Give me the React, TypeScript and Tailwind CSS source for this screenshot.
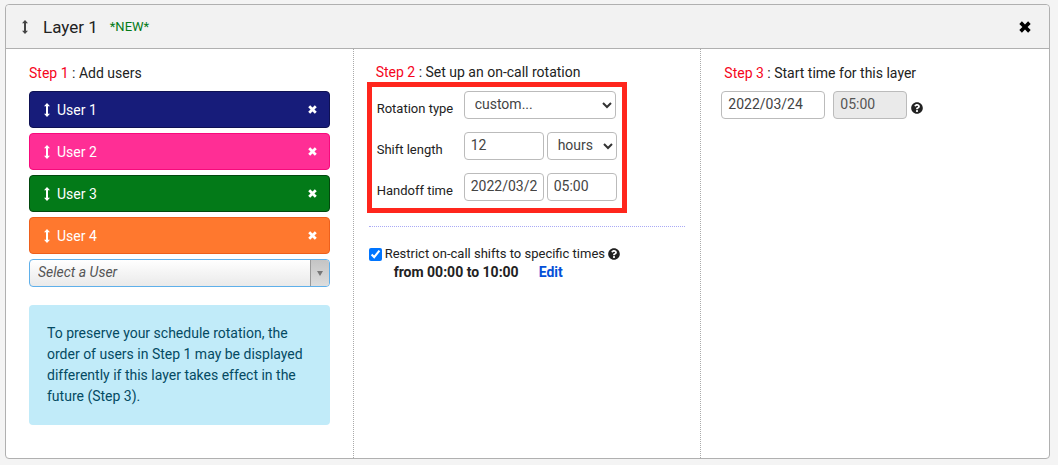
import { useState } from 'react';
import { FaQuestionCircle } from 'react-icons/fa';

const initialUsers = [
  { name: 'User 1', color: 'bg-[#171c7a] border-[#0e1153]' },
  { name: 'User 2', color: 'bg-[#ff2e95] border-[#f70a7c]' },
  { name: 'User 3', color: 'bg-[#037a18] border-[#02480e]' },
  { name: 'User 4', color: 'bg-[#ff782e] border-[#ee601c]' },
];

const field =
  'h-7 rounded border border-[#bbbbbb] bg-white px-1.5 pb-0.5 text-sm text-[#444444] outline-none';

function DragIcon({ className }: { className: string }) {
  return (
    <svg className={className} viewBox="0 0 6 14" fill="currentColor" aria-hidden="true">
      <path d="M3 0l3 3.3H4v7.4h2L3 14 0 10.7h2V3.3H0z" />
    </svg>
  );
}

function CloseIcon({ className }: { className: string }) {
  return (
    <svg className={className} viewBox="0 0 12 12" fill="currentColor" aria-hidden="true">
      <path d="M2.9.3L6 3.4 9.1.3l2.6 2.6L8.6 6l3.1 3.1-2.6 2.6L6 8.6l-3.1 3.1L.3 9.1 3.4 6 .3 2.9z" />
    </svg>
  );
}

function Chevron() {
  return (
    <svg
      className="pointer-events-none absolute top-2.5 right-1 h-2 w-2.5"
      viewBox="0 0 10 8"
      fill="none"
      stroke="#333333"
      strokeWidth="2"
      aria-hidden="true"
    >
      <path d="M1 2l4 4 4-4" />
    </svg>
  );
}

function StepTitle({ step, children }: { step: number; children: string }) {
  return (
    <h3 className="text-sm leading-5 text-[#222222]">
      <span className="text-[#f5051c]">Step {step}</span> : {children}
    </h3>
  );
}

export default function App() {
  const [users, setUsers] = useState(initialUsers);
  const [restricted, setRestricted] = useState(true);

  return (
    <div className="min-h-screen bg-[#f4f4f4] pt-1 pr-2 pb-1.5 pl-[5px] font-['Roboto',sans-serif] text-[#222222]">
      <section className="rounded border border-[#b0b0b0] bg-white">
        {/* Layer header */}
        <header className="flex h-11 items-center rounded-t border-b border-[#b0b0b0] bg-[#f2f2f2] pr-[18px] pl-4">
          <DragIcon className="h-3.5 w-1.5 text-[#444444]" />
          <h2 className="ml-[15px] text-[17px] leading-6">Layer 1</h2>
          <span className="ml-3 text-[13px] text-[#037a18]">*NEW*</span>
          <button type="button" aria-label="Remove layer" className="ml-auto text-black">
            <CloseIcon className="h-3 w-3" />
          </button>
        </header>

        <div className="grid grid-cols-3">
          {/* Step 1 */}
          <div className="border-r border-dotted border-[#aaaaaa] px-[23px] pt-3.5 pb-[33px]">
            <StepTitle step={1}>Add users</StepTitle>
            <ul className="mt-2 flex flex-col gap-[5px]">
              {users.map((user) => (
                <li
                  key={user.name}
                  className={`flex h-[37px] items-center rounded border pr-3 pl-3.5 text-sm text-white ${user.color}`}
                >
                  <DragIcon className="h-3.5 w-1.5" />
                  <span className="ml-[7px]">{user.name}</span>
                  <button
                    type="button"
                    aria-label={`Remove ${user.name}`}
                    className="ml-auto"
                    onClick={() => setUsers(users.filter((u) => u.name !== user.name))}
                  >
                    <CloseIcon className="size-[9px]" />
                  </button>
                </li>
              ))}
            </ul>
            <div className="relative mt-[5px]">
              <select
                aria-label="Select a User"
                className="block h-7 w-full appearance-none rounded border border-[#5fb0ea] bg-linear-to-b from-white to-[#eaeaea] pr-6 pb-0.5 pl-2 text-sm text-[#555555] italic outline-none"
              >
                <option>Select a User</option>
              </select>
              <span className="pointer-events-none absolute inset-y-px right-px flex w-[19px] items-center justify-center rounded-r-[3px] border-l border-[#999999] bg-linear-to-b from-[#c4c4c4] to-[#dddddd]">
                <svg className="h-1.5 w-1.5" viewBox="0 0 6 6" fill="#777777" aria-hidden="true">
                  <path d="M0 1h6L3 6z" />
                </svg>
              </span>
            </div>
            <p className="mt-[18px] rounded bg-[#c1ebf9] p-[18px] text-sm leading-[21px] text-[#044a63]">
              To preserve your schedule rotation, the order of users in Step 1 may be displayed
              differently if this layer takes effect in the future (Step 3).
            </p>
          </div>

          {/* Step 2 */}
          <div className="border-r border-dotted border-[#aaaaaa] px-[13px] pt-[13px]">
            <div className="pl-[9px]">
              <StepTitle step={2}>Set up an on-call rotation</StepTitle>
            </div>
            <div className="flex w-fit flex-col gap-[13px] border-[5px] border-[#ff261d] px-[5px] pt-1 pb-[7px]">
              <div className="flex items-end">
                <label htmlFor="rotation-type" className="w-[87px] text-[13px] leading-5">
                  Rotation type
                </label>
                <div className="relative">
                  <select id="rotation-type" className={`${field} w-[152px] appearance-none pl-2.5`}>
                    <option>custom...</option>
                  </select>
                  <Chevron />
                </div>
              </div>
              <div className="flex items-end">
                <label htmlFor="shift-length" className="w-[87px] text-[13px] leading-5">
                  Shift length
                </label>
                <input id="shift-length" defaultValue="12" className={`${field} w-20`} />
                <div className="relative ml-[3px]">
                  <select
                    aria-label="Shift length unit"
                    className={`${field} w-[70px] appearance-none pl-2.5`}
                  >
                    <option>hours</option>
                    <option>days</option>
                    <option>weeks</option>
                  </select>
                  <Chevron />
                </div>
              </div>
              <div className="flex items-end">
                <label htmlFor="handoff-date" className="w-[87px] text-[13px] leading-5">
                  Handoff time
                </label>
                <input id="handoff-date" defaultValue="2022/03/24" className={`${field} w-20`} />
                <input
                  aria-label="Handoff hour"
                  defaultValue="05:00"
                  className={`${field} ml-[3px] w-[70px]`}
                />
              </div>
            </div>

            <hr className="mx-0.5 mt-[13px] border-dotted border-[#a9a9f5]" />

            <div className="mt-[17px] flex items-center text-[13px] leading-5">
              <input
                id="restrict"
                type="checkbox"
                checked={restricted}
                onChange={(e) => setRestricted(e.target.checked)}
                className="mr-[3px] ml-0.5 size-[13px] accent-[#0075ff]"
              />
              <label htmlFor="restrict">Restrict on-call shifts to specific times</label>
              <FaQuestionCircle className="ml-[3px] size-3" />
            </div>
            <p className="pl-[27px] text-sm leading-4 font-bold">
              from 00:00 to 10:00
              <a href="#edit" className="ml-5 text-[#0450d8]">
                Edit
              </a>
            </p>
          </div>

          {/* Step 3 */}
          <div className="px-5 pt-3.5">
            <div className="pl-[3px]">
              <StepTitle step={3}>Start time for this layer</StepTitle>
            </div>
            <div className="mt-2 flex items-center">
              <input
                aria-label="Start date"
                defaultValue="2022/03/24"
                className={`${field} w-[104px]`}
              />
              <input
                aria-label="Start time"
                defaultValue="05:00"
                disabled
                className="ml-2 h-7 w-[74px] rounded border border-[#bbbbbb] bg-[#eaeaea] px-1.5 pb-0.5 text-sm text-[#555555]"
              />
              <FaQuestionCircle className="mt-1.5 ml-1 size-3" />
            </div>
          </div>
        </div>
      </section>
    </div>
  );
}
